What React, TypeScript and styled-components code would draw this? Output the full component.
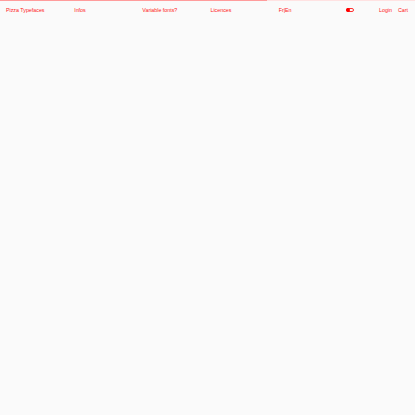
import styled, { createGlobalStyle } from "styled-components";

const Global = createGlobalStyle`
  html, body {
    margin: 0;
    padding: 0;
    background: #fafafa;
  }
  body {
    font-family: "Liberation Sans", Arial, sans-serif;
    min-height: 415px;
  }
`;

const Page = styled.div`
  min-height: 415px;
  background: #fafafa;
`;

const Progress = styled.div`
  height: 1px;
  background: #ffe2e2;
`;

const Bar = styled.div<{ $pct: number }>`
  height: 1px;
  width: ${(p) => p.$pct}%;
  background: #ff9c9c;
`;

const Nav = styled.nav`
  display: grid;
  grid-template-columns: repeat(6, 1fr);
  align-items: center;
  height: 18px;
  padding-left: 6px;
`;

const Link = styled.a`
  color: #ff2020;
  font-size: 5.3px;
  text-decoration: none;
  white-space: nowrap;
`;

const End = styled.div`
  display: flex;
  align-items: center;
  padding-right: 6px;
  padding-left: 0;
  gap: 6px;
  margin-left: -1px;
`;

const Toggle = styled.span`
  display: inline-flex;
  align-items: center;
  width: 8px;
  height: 4px;
  border: 0.6px solid #ff3030;
  border-radius: 3px;
  margin-right: auto;
  padding: 0.4px;
  box-sizing: border-box;
`;

const Knob = styled.span`
  width: 4px;
  height: 4px;
  border-radius: 50%;
  background: #ff0000;
  margin-left: -1px;
`;

export default function App() {
  return (
    <Page>
      <Global />
      <Progress>
        <Bar $pct={64.4} />
      </Progress>
      <Nav>
        <Link>Pizza Typefaces</Link>
        <Link>Infos</Link>
        <Link>Variable fonts?</Link>
        <Link>Licences</Link>
        <Link>Fr|En</Link>
        <End>
          <Toggle>
            <Knob />
          </Toggle>
          <Link>Login</Link>
          <Link style={{ marginRight: 1 }}>Cart</Link>
        </End>
      </Nav>
    </Page>
  );
}
